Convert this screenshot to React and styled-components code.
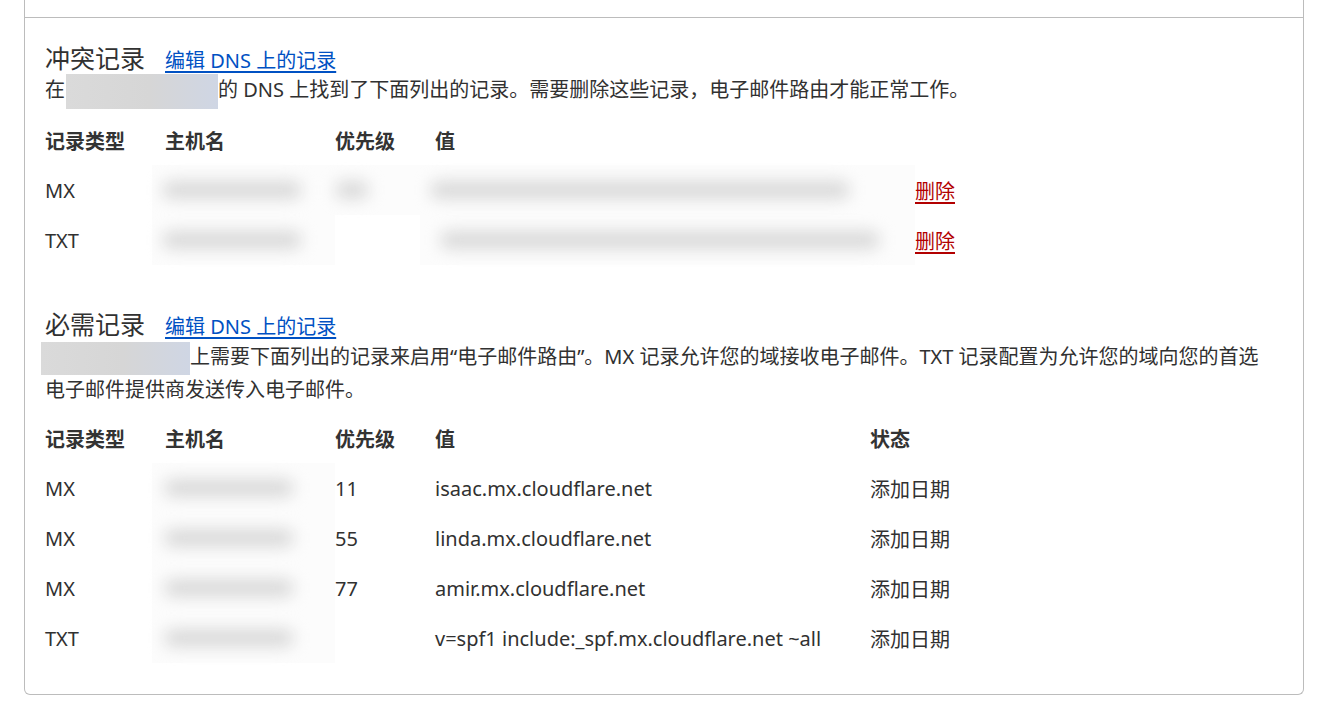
import React from "react";
import styled, { createGlobalStyle } from "styled-components";

const Global = createGlobalStyle`
  html, body { margin: 0; padding: 0; background: #fff; }
  body {
    font-family: "Noto Sans", "Noto Sans CJK SC", sans-serif;
    color: #313131;
  }
`;

const Page = styled.div`
  padding: 0 0 7px 24px;
`;

const Card = styled.div`
  width: 1280px;
  box-sizing: border-box;
  border: 1px solid #bcbcbc;
  border-top: none;
  border-radius: 0 0 6px 6px;
`;

const TopStrip = styled.div`
  height: 17px;
  border-bottom: 1px solid #bcbcbc;
`;

const Section = styled.section`
  padding: ${(p) => p.$pt}px 20px ${(p) => p.$pb}px 20px;
`;

const HeadRow = styled.div`
  display: flex;
  align-items: baseline;
  gap: 20px;
  height: 34px;
`;

const Title = styled.h2`
  margin: 0;
  font-size: 25px;
  font-weight: 400;
  line-height: 34px;
  color: #313131;
  font-family: "Noto Sans CJK SC", "Noto Sans", sans-serif;
`;

const EditLink = styled.a`
  font-size: 20px;
  color: #0051c3;
  text-decoration: underline;
  text-underline-offset: 3px;
  cursor: pointer;
`;

const Desc = styled.p`
  margin: ${(p) => p.$mt || 0}px 0 0 0;
  padding-right: 14px;
  font-size: 20px;
  line-height: ${(p) => p.$lh}px;
  color: #313131;
`;

const Masked = styled.span`
  display: inline-block;
  vertical-align: middle;
  width: ${(p) => p.$w}px;
  height: ${(p) => p.$h}px;
  margin: ${(p) => p.$m};
  background: linear-gradient(90deg, #dadada 0%, #d6d6d6 55%, #cfd6e4 100%);
`;

const Table = styled.div`
  margin-top: ${(p) => p.$mt}px;
  display: grid;
  grid-template-columns: ${(p) => p.$cols};
`;

const Cell = styled.div`
  height: 50px;
  display: flex;
  align-items: center;
  font-size: 20px;
  color: #313131;
  white-space: nowrap;
`;

const HeadCell = styled(Cell)`
  font-weight: 700;
  font-family: "Noto Sans CJK SC", "Noto Sans", sans-serif;
  color: #333;
`;

const BlurCell = styled(Cell)`
  margin-left: ${(p) => p.$ml}px;
  background: ${(p) => (p.$bg ? "#fcfcfc" : "transparent")};
`;

const BlurBar = styled.span`
  display: block;
  width: ${(p) => p.$w}px;
  height: 18px;
  margin-left: ${(p) => p.$ml || 0}px;
  background: #d9d9d9;
  border-radius: 9px;
  filter: blur(8px);
`;

const DeleteLink = styled.a`
  color: #b20000;
  text-decoration: underline;
  text-underline-offset: 3px;
  font-size: 20px;
  cursor: pointer;
`;

const conflicts = [
  { type: "MX", host: 140, pri: 34, val: 420, valMl: 10 },
  { type: "TXT", host: 140, pri: 0, val: 440, valMl: 20 },
];

const required = [
  { type: "MX", pri: "11", val: "isaac.mx.cloudflare.net" },
  { type: "MX", pri: "55", val: "linda.mx.cloudflare.net" },
  { type: "MX", pri: "77", val: "amir.mx.cloudflare.net" },
  { type: "TXT", pri: "", val: "v=spf1 include:_spf.mx.cloudflare.net ~all" },
];

export default function App() {
  return (
    <>
      <Global />
      <Page>
        <Card>
          <TopStrip />
          <Section $pt={22} $pb={0}>
            <HeadRow>
              <Title>冲突记录</Title>
              <EditLink>编辑 DNS 上的记录</EditLink>
            </HeadRow>
            <Desc $lh={32}>
              在<Masked $w={152} $h={35} $m="0 0 0 1px" />的 DNS 上找到了下面列出的记录。需要删除这些记录，电子邮件路由才能正常工作。
            </Desc>
            <Table $mt={6} $cols="120px 170px 100px 480px auto">
              <HeadCell>记录类型</HeadCell>
              <HeadCell>主机名</HeadCell>
              <HeadCell>优先级</HeadCell>
              <HeadCell>值</HeadCell>
              <HeadCell />
              {conflicts.map((r, i) => (
                <React.Fragment key={i}>
                  <Cell>{r.type}</Cell>
                  <BlurCell $ml={-13} $bg>
                    <BlurBar $w={r.host} $ml={10} />
                  </BlurCell>
                  <BlurCell $ml={-5} $bg={i === 0}>
                    {r.pri ? <BlurBar $w={r.pri} $ml={5} /> : null}
                  </BlurCell>
                  <BlurCell $ml={-15} $bg>
                    <BlurBar $w={r.val} $ml={r.valMl} />
                  </BlurCell>
                  <Cell>
                    <DeleteLink>删除</DeleteLink>
                  </Cell>
                </React.Fragment>
              ))}
            </Table>
          </Section>
          <Section $pt={41} $pb={31}>
            <HeadRow>
              <Title>必需记录</Title>
              <EditLink>编辑 DNS 上的记录</EditLink>
            </HeadRow>
            <Desc $lh={30} $mt={2}>
              <Masked $w={149} $h={33} $m="0 0 0 -4px" />上需要下面列出的记录来启用“电子邮件路由”。MX 记录允许您的域接收电子邮件。TXT 记录配置为允许您的域向您的首选电子邮件提供商发送传入电子邮件。
            </Desc>
            <Table $mt={8} $cols="120px 170px 100px 435px auto">
              <HeadCell>记录类型</HeadCell>
              <HeadCell>主机名</HeadCell>
              <HeadCell>优先级</HeadCell>
              <HeadCell>值</HeadCell>
              <HeadCell>状态</HeadCell>
              {required.map((r, i) => (
                <React.Fragment key={i}>
                  <Cell>{r.type}</Cell>
                  <BlurCell $ml={-13} $bg>
                    <BlurBar $w={130} $ml={12} />
                  </BlurCell>
                  <Cell>{r.pri}</Cell>
                  <Cell>{r.val}</Cell>
                  <Cell>添加日期</Cell>
                </React.Fragment>
              ))}
            </Table>
          </Section>
        </Card>
      </Page>
    </>
  );
}
